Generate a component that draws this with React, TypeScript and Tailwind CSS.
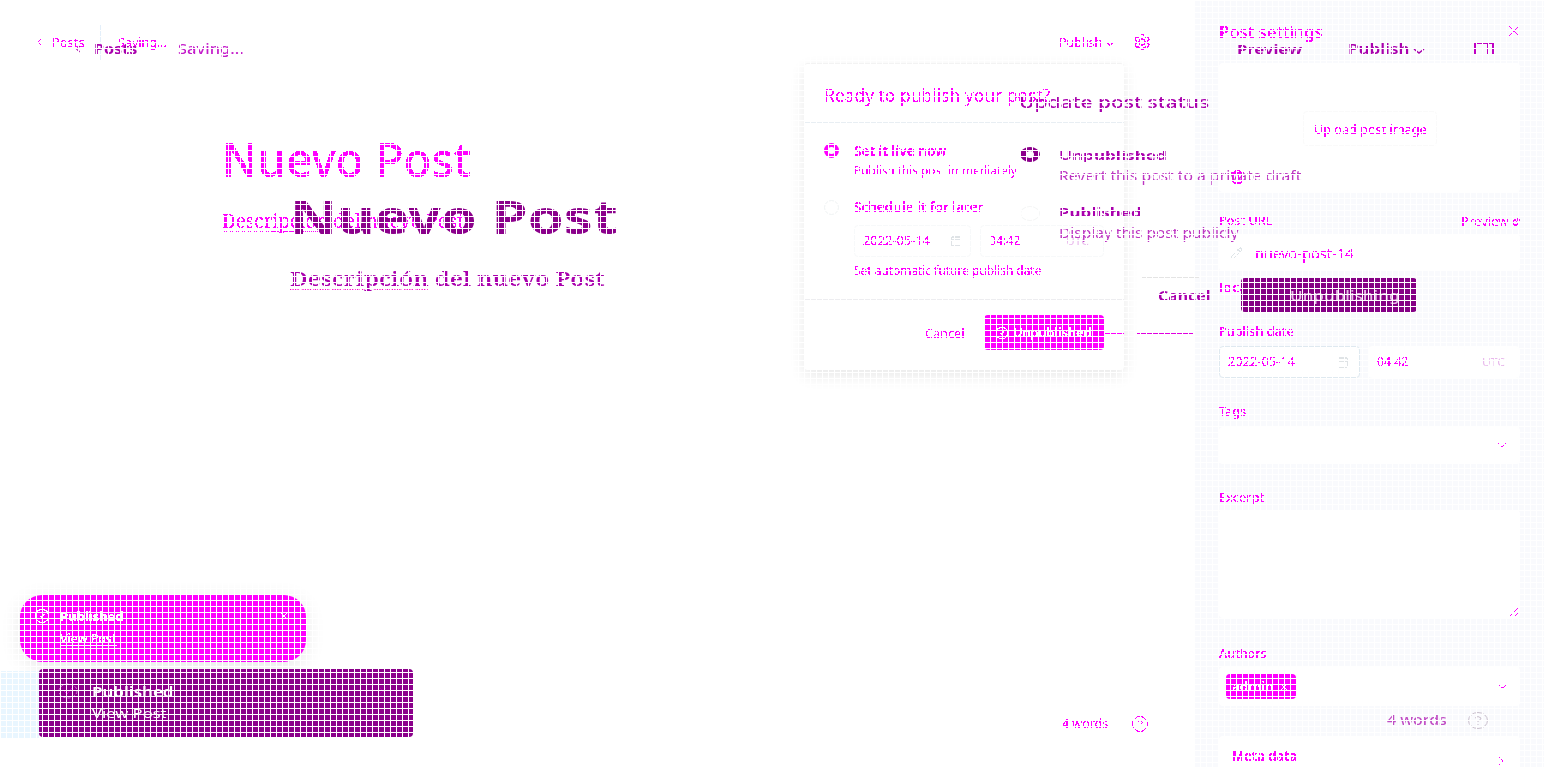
import React, { useLayoutEffect, useRef } from "react";
import { ChevronLeft, ChevronDown, ChevronRight, X, Settings, Pencil, Trash2, CalendarDays, CircleCheck, CircleHelp, ExternalLink } from "lucide-react";

/* One line of text, stretched horizontally to fill exactly `w` pixels. */
function Fit({ w, className = "", soft = false, children }: { w: number; className?: string; soft?: boolean; children: React.ReactNode }) {
  const box = useRef<HTMLSpanElement>(null);
  const ink = useRef<HTMLSpanElement>(null);
  useLayoutEffect(() => {
    if (!box.current || !ink.current) return;
    box.current.style.width = `${w}px`;
    ink.current.style.transform = `scaleX(${w / ink.current.offsetWidth})`;
  }, [w]);
  return (
    <span ref={box} className={"inline-flex shrink-0 overflow-visible leading-normal " + (soft ? "" : "[filter:url(#crisp)]")}>
      <span ref={ink} className={"inline-block origin-left whitespace-nowrap " + className}>{children}</span>
    </span>
  );
}

function Stamp({ small }: { small?: boolean }) {
  return (
    <>
      <div className={"flex shrink-0 items-center rounded border px-2 " + (small ? "mr-[9px] h-8 w-[117px] border-[#f7f9fa]" : "mr-2 h-8 w-[141px] border-[#dfe9f0] bg-white")}>
        <Fit w={67} className="text-[13px]">2022-05-14</Fit>
        <CalendarDays className={"ml-auto size-3 text-[#dfe3e6] " + (small ? "" : "mr-0.5")} />
      </div>
      <div className={"flex h-8 flex-1 items-center rounded border px-2 " + (small ? "border-[#f7f9fa]" : "border-white bg-white")}>
        <Fit w={31} className="text-[13px]">04:42</Fit>
        <span className="mr-[6px] ml-auto flex text-[#e8b8ec]"><Fit w={23} soft className="text-[11px]">UTC</Fit></span>
      </div>
    </>
  );
}

function PublishMenu() {
  return (
    <div className="absolute top-[63px] left-[804px] flex h-[307px] w-[320px] flex-col rounded border-t border-[#f3f3f3] bg-white shadow-[0_6px_16px_rgba(0,0,0,0.09)]">
      <div className="flex h-[59px] items-center border-b border-[#e8eef3] pt-[5px] pl-5">
        <Fit w={226} className="text-[17.5px]">Ready to publish your post?</Fit>
      </div>
      <div className="flex h-[177px] flex-col border-b border-[#ededf0] pr-5 pl-5">
        <div className="mt-[18px] flex h-5 items-center">
          <i className="-mt-0.5 mr-[15px] size-[15px] rounded-full border-[4px] border-[#f0f]" />
          <Fit w={92} className="text-[13.5px] font-semibold">Set it live now</Fit>
        </div>
        <div className="flex h-5 items-center pl-[30px]"><Fit w={163} className="text-[12.5px]">Publish this post immediately</Fit></div>
        <div className="mt-4 flex h-5 items-center">
          <i className="mr-[15px] size-[15px] rounded-full border border-[#f0f3f4]" />
          <Fit w={129} className="text-[13.5px] font-semibold">Schedule it for later</Fit>
        </div>
        <div className="mt-[7px] flex h-8 pt-px pl-[30px]"><Stamp small /></div>
        <div className="mt-[5px] flex h-5 items-center pl-[30px]"><Fit w={187} className="text-[12.5px]">Set automatic future publish date</Fit></div>
      </div>
      <div className="flex h-[66px] items-center justify-end pr-5">
        <span className="flex pt-px"><Fit w={39} className="text-[13px]">Cancel</Fit></span>
        <div className="-mt-0.5 ml-5 flex h-[35px] w-[120px] items-center rounded bg-[#f0f] pt-0.5 pl-[11px] text-white">
          <CircleCheck className="mr-1 size-[14px]" strokeWidth={1.8} />
          <Fit w={78} className="text-[13px] font-semibold">Unpublished</Fit>
        </div>
      </div>
    </div>
  );
}

function Editor() {
  return (
    <main className="relative flex w-[1195px] shrink-0 flex-col text-[#f0f] [&_svg]:[filter:url(#crisp)]">
      <header className="flex h-[86px] shrink-0 items-center pr-11 pl-9">
        <ChevronLeft className="-mt-0.5 -ml-0.5 size-2.5" strokeWidth={2} />
        <span className="ml-2 flex"><Fit w={33} className="text-[12.5px]">Posts</Fit></span>
        <i className="-mt-px ml-[15px] h-[35px] w-px bg-[#e3effa]" />
        <span className="ml-[17px] flex"><Fit w={49} className="text-[12.5px]">Saving...</Fit></span>
        <span className="ml-auto flex pt-px"><Fit w={43} className="text-[12.5px]">Publish</Fit></span>
        <ChevronDown className="mt-0.5 ml-0.5 size-3" strokeWidth={2} />
        <svg className="-mt-0.5 ml-[17px] size-[18px]" viewBox="0 0 18 18" fill="none" stroke="currentColor" strokeWidth="1.1">
          <path d="M7.5 1.5h3l.5 2 1.6.9 2-.6 1.5 2.6-1.5 1.4v2.4l1.5 1.4-1.5 2.6-2-.6-1.6.9-.5 2h-3l-.5-2-1.6-.9-2 .6-1.5-2.6 1.5-1.4V7.8L1.900 6.400l1.500-2.600 2 .6L7 3.500z" />
          <circle cx="9" cy="9" r="3" />
        </svg>
      </header>
      <div className="flex h-[152px] flex-col pt-[37px] pl-[222px]">
        <div className="flex h-[72px] items-center"><Fit w={249} className="text-[48px] font-medium">Nuevo Post</Fit></div>
        <div className="mt-3 flex h-7 items-center font-[Noto_Serif,'DejaVu_Serif',serif]">
          <Fit w={242} className="text-[19px]">
            <span className="underline decoration-dotted decoration-1 underline-offset-[3px]">Descripción</span> del nuevo Post
          </Fit>
        </div>
      </div>
      <footer className="mt-auto flex h-[172px] items-start pr-[46px] pl-5">
        <div className="flex h-[67px] w-[286px] items-start rounded-[22px] bg-[#f0f] pt-[13px] pr-4 pl-[14px] text-white shadow-[0_4px_20px_rgba(0,0,0,0.1)]">
          <CircleCheck className="mr-2.5 size-4" strokeWidth={1.7} />
          <div className="-mt-px flex flex-col">
            <div className="flex h-5 items-center"><Fit w={63} className="text-[13px] font-bold">Published</Fit></div>
            <div className="mt-0.5 flex h-5 items-center"><Fit w={56} className="text-[12.5px] font-medium underline underline-offset-2">View Post</Fit></div>
          </div>
          <X className="mt-0.5 ml-auto size-3" strokeWidth={2.2} />
        </div>
        <div className="mt-[118px] ml-auto flex h-5 items-center pt-px">
          <Fit w={46} className="text-[13px]">4 words</Fit>
          <CircleHelp className="ml-[23px] size-[18px]" strokeWidth={1.2} />
        </div>
      </footer>
      <PublishMenu />
    </main>
  );
}

function Caption({ w, text }: { w: number; text: string }) {
  return <div className="relative top-px flex h-5 shrink-0 items-center"><Fit w={w} className="text-[13px] font-medium">{text}</Fit></div>;
}

function SettingsPane() {
  return (
    <aside className="flex h-[767px] flex-1 flex-col overflow-hidden bg-[#f9fafd] pr-6 pl-6 text-[#f0f] [&_svg]:[filter:url(#crisp)]">
      <div className="flex h-[63px] shrink-0 items-center justify-between">
        <Fit w={104} className="text-[16px] font-medium">Post settings</Fit>
        <X className="-mt-0.5 -mr-[3px] size-[18px]" strokeWidth={1.5} />
      </div>
      <div className="flex h-[129px] shrink-0 flex-col rounded bg-white pt-12">
        <div className="flex h-[35px] w-[134px] items-center justify-center self-center rounded border border-[#fafafa] pt-0.5 pl-0.5">
          <Fit w={113} className="text-[13px]">Upload post image</Fit>
        </div>
        <Trash2 className="mt-[23px] ml-[11px] size-[15px]" strokeWidth={2} />
      </div>
      <div className="mt-[19px] flex h-5 shrink-0 items-center justify-between">
        <Fit w={53} className="text-[13px] font-medium">Post URL</Fit>
        <span className="flex items-center gap-1 pt-0.5"><Fit w={47} className="text-[12.5px]">Preview</Fit><ExternalLink className="size-2" strokeWidth={3} /></span>
      </div>
      <div className="mt-[3px] flex h-[37px] shrink-0 items-center rounded bg-white pt-0.5 pl-[11px]">
        <Pencil className="mr-3 size-[13px] text-[#dfe5e8]" strokeWidth={1.8} />
        <Fit w={98} className="text-[14px]">nuevo-post-14</Fit>
      </div>
      <div className="mt-[6px]"><Caption w={33} text="local" /></div>
      <div className="mt-6"><Caption w={75} text="Publish date" /></div>
      <div className="mt-[5px] flex h-8 shrink-0"><Stamp /></div>
      <div className="mt-[23px]"><Caption w={27} text="Tags" /></div>
      <div className="mt-[6px] flex h-[37px] shrink-0 items-center justify-end rounded bg-white pr-[11px]"><ChevronDown className="-mt-0.5 size-[14px]" strokeWidth={1.8} /></div>
      <div className="mt-[23px]"><Caption w={45} text="Excerpt" /></div>
      <div className="mt-[3px] flex h-[108px] shrink-0 items-end justify-end rounded bg-white pr-px pb-px">
        <svg className="size-2.5" viewBox="0 0 10 10" stroke="#f0f" fill="none"><path d="M1 9 9 1M6 9l3-3" /></svg>
      </div>
      <div className="mt-[25px]"><Caption w={48} text="Authors" /></div>
      <div className="mt-1 flex h-[39px] shrink-0 items-center justify-between rounded bg-white pr-[11px] pl-[7px]">
        <div className="flex h-[25px] w-[70px] items-center rounded bg-[#f0f] pl-1.5 text-white">
          <Fit w={41} className="text-[13px] font-medium">admin</Fit>
          <X className="ml-1.5 size-2.5" strokeWidth={2.5} />
        </div>
        <ChevronDown className="size-[13px]" strokeWidth={1.8} />
      </div>
      <div className="mt-[30px] flex h-[60px] shrink-0 items-start justify-between rounded bg-white pt-2.5 pr-[11px] pl-[13px]">
        <Fit w={65} className="text-[13.5px] font-semibold">Meta data</Fit>
        <ChevronRight className="mt-[7px] size-4" strokeWidth={1.5} />
      </div>
    </aside>
  );
}

/* Wide view of the same editor, painted over the first one. */
function WideEditor() {
  return (
    <div className="absolute inset-0 flex flex-col overflow-hidden text-[#a900ad]">
      <div className="flex h-[98px] shrink-0 items-center pr-[50px] pl-[73px]">
        <ChevronLeft className="size-2.5 text-[#a0a]" strokeWidth={3} />
        <span className="ml-[11px] flex pt-px"><Fit soft w={43} className="text-[13.5px] font-bold">Posts</Fit></span>
        <span className="ml-[41px] flex pt-px text-[#c41cca]"><Fit soft w={66} className="text-[13.5px] font-medium">Saving...</Fit></span>
        <span className="ml-auto flex pt-px"><Fit soft w={65} className="text-[13px] font-bold">Preview</Fit></span>
        <span className="ml-[46px] flex pt-px"><Fit soft w={61} className="text-[13.5px] font-semibold">Publish</Fit></span>
        <svg className="mt-[3px] ml-1 h-2 w-3" viewBox="0 0 12 8" fill="none" stroke="currentColor" strokeWidth="1.5"><path d="m1 2 5 4 5-4" /></svg>
        <svg className="ml-[49px] h-[14px] w-5" viewBox="0 0 20 14" fill="none" stroke="#c000c4" strokeWidth="2"><path d="M1 13V1h18v12M14 2v11" /></svg>
      </div>
      <div className="flex min-h-0 flex-1">
        <div className="flex w-[1019px] shrink-0 flex-col">
          <div className="flex h-[200px] flex-col pt-[82px] pl-[290px]">
            <div className="flex h-[72px] shrink-0 items-center text-[#8b008b]"><Fit soft w={328} className="text-[47px] font-bold">Nuevo Post</Fit></div>
            <div className="mt-[13px] flex h-7 shrink-0 items-center font-[Noto_Serif,'DejaVu_Serif',serif]">
              <Fit soft w={314} className="text-[19px] font-semibold"><span className="underline decoration-[#f0c] decoration-dotted decoration-1 underline-offset-[3px]">Descripción</span> del nuevo Post</Fit>
            </div>
          </div>
          <div className="mt-auto mb-[30px] flex h-[68px] items-stretch">
            <i className="mt-0.5 -mb-px w-[39px] bg-[#e9f6ff]" />
            <div className="flex w-[374px] items-start rounded bg-[#8b008b] pt-3.5 pr-6 pl-[19px] text-white">
              <svg className="mr-[14px] h-4 w-5 text-[#d77bd7]" viewBox="0 0 20 16" fill="none" stroke="currentColor"><ellipse cx="10" cy="8" rx="9" ry="7" strokeDasharray="3 2" /><path d="m6 8 3 3 5-6" stroke="#d000d0" /></svg>
              <div className="-mt-px flex flex-col">
                <div className="flex h-5 items-center"><Fit soft w={82} className="text-[13.5px] font-semibold">Published</Fit></div>
                <div className="mt-0.5 flex h-5 items-center"><Fit soft w={74} className="text-[13px] underline underline-offset-2">View Post</Fit></div>
              </div>
              <X className="mt-0.5 ml-auto size-3 text-[#b000b0]" strokeWidth={1.5} />
            </div>
          </div>
        </div>
        <div className="flex flex-1 flex-col">
          <div className="mt-[-9px] flex h-6 items-center pt-px"><Fit soft w={190} className="text-[17px] font-medium">Update post status</Fit></div>
          <div className="mt-8 flex h-5 items-center">
            <i className="mr-[19px] ml-px -mt-px h-[15px] w-5 rounded-[50%] border-x-[6px] border-y-[4px] border-[#8b008b]" />
            <span className="flex pt-px"><Fit soft w={108} className="text-[13px] font-bold">Unpublished</Fit></span>
          </div>
          <div className="flex h-5 items-center pt-0.5 pl-10 text-[#bd35c2]"><Fit soft w={242} className="text-[13.5px]">Revert this post to a private draft</Fit></div>
          <div className="mt-[17px] flex h-5 items-center pt-0.5">
            <i className="ml-px mr-[19px] h-[15px] w-5 rounded-[50%] border border-[#f5f6f6]" />
            <Fit soft w={82} className="text-[13px] font-bold">Published</Fit>
          </div>
          <div className="flex h-5 items-center pt-0.5 pl-10 text-[#bd35c2]"><Fit soft w={179} className="text-[13.5px]">Display this post publicly</Fit></div>
          <div className="mt-[35px] flex h-[56px] w-[398px]">
            <div className="flex h-[35px] flex-1">
              <div className="ml-[123px] flex w-[57px] shrink-0 items-center border-t border-[#e4e4e4] pl-4 pt-0.5"><Fit soft w={53} className="text-[13.5px] font-bold">Cancel</Fit></div>
              <div className="ml-[42px] mt-px flex w-[176px] shrink-0 items-center rounded-sm bg-[#850085] pt-0.5 pl-[49px] text-[#e8bde8]"><Fit soft w={109} className="text-[13.5px] font-medium">Unpublishing</Fit></div>
            </div>
          </div>
          <div className="flex h-px"><i className="ml-[85px] w-5 bg-[#f0f]" /><i className="ml-[13px] w-[56px] bg-[#e000e0]" /></div>
          <div className="mt-auto mb-[37px] ml-[368px] flex h-5 items-center text-[#c04cc4]">
            <Fit soft w={60} className="text-[13.5px] font-medium">4 words</Fit>
            <svg className="ml-[21px] h-[17px] w-5 text-[#c9bfcc]" viewBox="0 0 20 17" fill="none" stroke="currentColor"><ellipse cx="10" cy="8.5" rx="9.5" ry="8" /><path d="M7 6q3-3 6 0 0 2-3 3v1m0 2v1" /></svg>
          </div>
        </div>
      </div>
    </div>
  );
}

export default function App() {
  return (
    <div className="relative flex h-[767px] w-[1544px] overflow-hidden bg-white font-['Noto_Sans',sans-serif]">
      <svg className="absolute size-0" aria-hidden="true">
        <filter id="crisp" colorInterpolationFilters="sRGB">
          <feComponentTransfer><feFuncA type="discrete" tableValues="0 0 1 1 1" /></feComponentTransfer>
        </filter>
      </svg>
      <Editor />
      <SettingsPane />
      <WideEditor />
      <div className="pointer-events-none absolute inset-0 bg-[repeating-linear-gradient(90deg,#fff_0_1px,transparent_1px_6px),repeating-linear-gradient(180deg,#fff_0_1px,transparent_1px_6px)]" />
    </div>
  );
}
